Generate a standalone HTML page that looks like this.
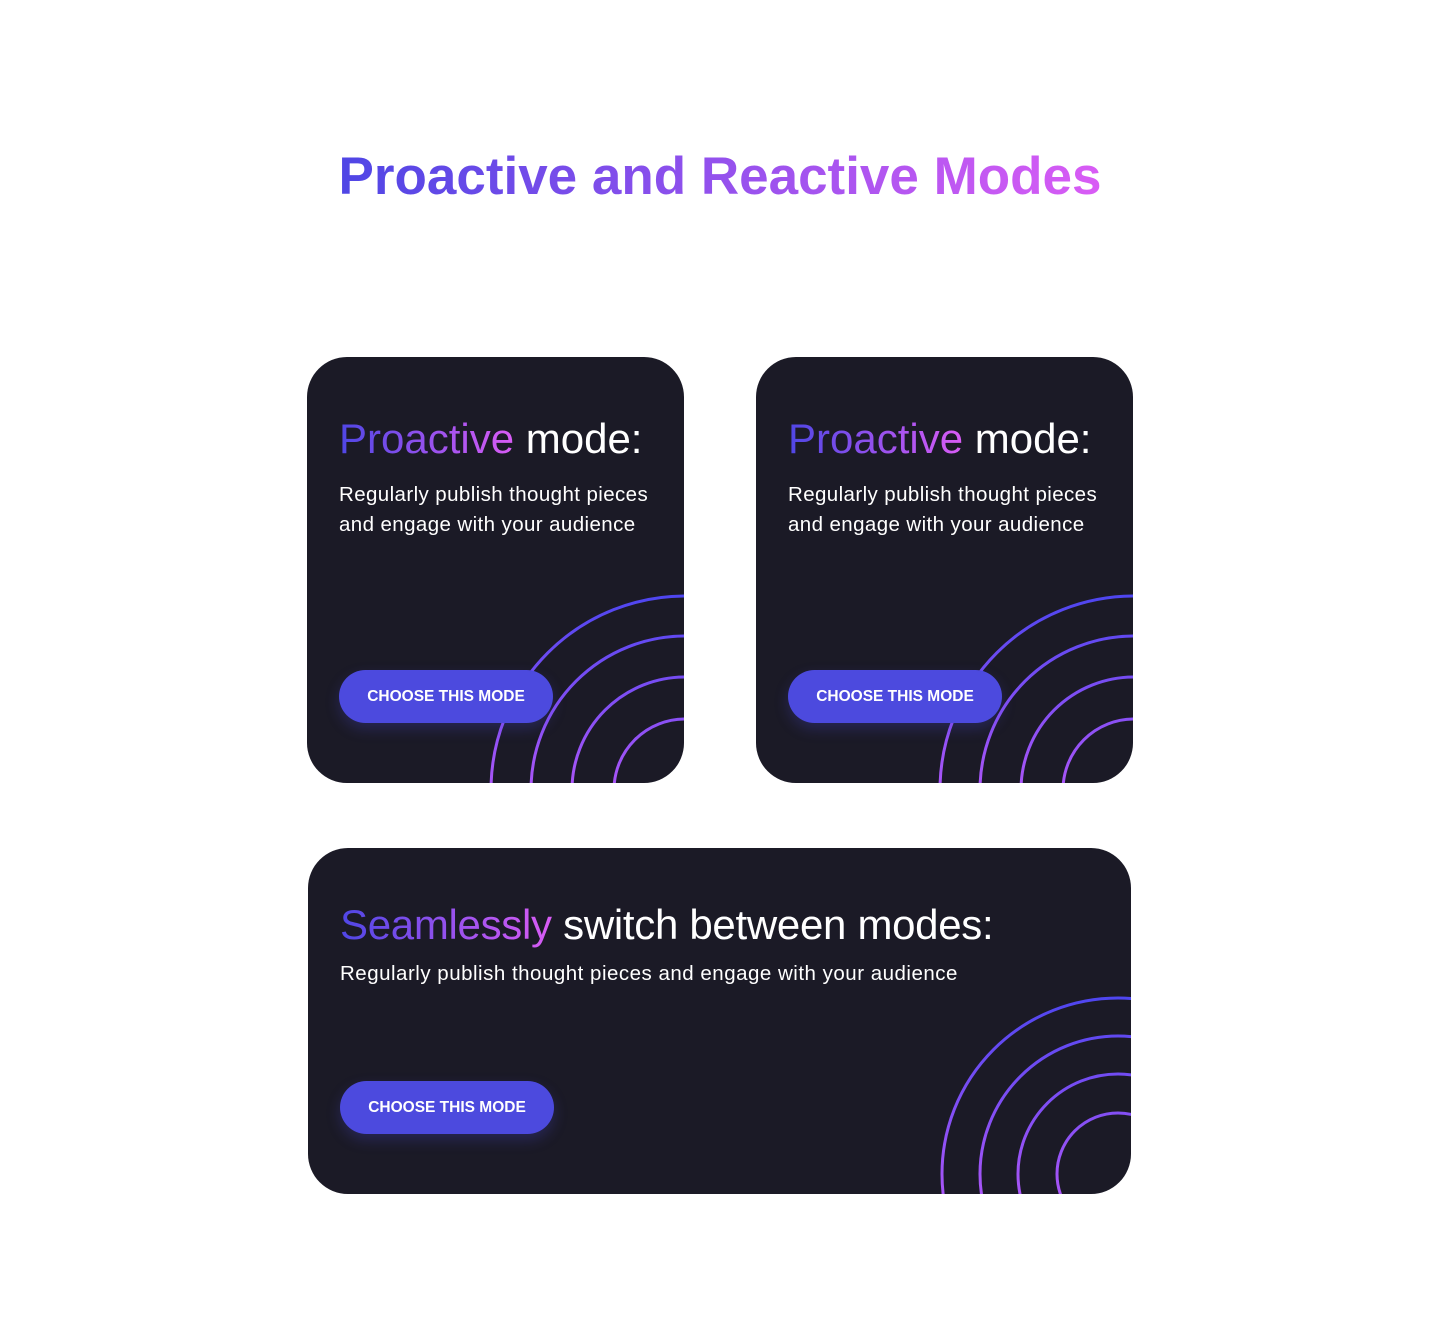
<!DOCTYPE html>
<html><head><style>
body{margin:0;width:1440px;height:1331px;background:#fff;font-family:"Liberation Sans",sans-serif;position:relative;overflow:hidden}
.g{background:linear-gradient(90deg,#4f46e5,#d95cf5);-webkit-background-clip:text;background-clip:text;color:transparent}
h1{position:absolute;top:146px;left:0;width:1440px;text-align:center;margin:0;font-size:53px;font-weight:bold;letter-spacing:0px}
h1 span{display:inline-block}
.card{position:absolute;background:#1b1a26;border-radius:40px;overflow:hidden}
.card h2{position:absolute;margin:0;font-size:42px;font-weight:normal;color:#fff;letter-spacing:0px;white-space:nowrap}
.card p{position:absolute;margin:0;color:#fff;font-size:20.5px;line-height:30px;font-weight:300;letter-spacing:0.4px;white-space:nowrap}
.btn{position:absolute;width:214px;height:53px;border-radius:27px;background:#4c4ade;color:#fff;font-size:15.5px;font-weight:bold;text-align:center;line-height:53px;box-shadow:0 6px 14px rgba(76,74,222,.25);z-index:2}
svg{position:absolute;left:0;top:0}
</style></head><body>
<h1><span class="g">Proactive and Reactive Modes</span></h1>

<div class="card" style="left:307px;top:357px;width:377px;height:426px">
<h2 style="left:32px;top:58px"><span class="g">Proactive</span> mode:</h2>
<p style="left:32px;top:123px">Regularly publish thought pieces<br>and engage with your audience</p>
<div class="btn" style="left:32px;top:313px">CHOOSE THIS MODE</div>
<svg width="377" height="426"><defs><linearGradient id="a" x1="0" y1="240" x2="0" y2="426" gradientUnits="userSpaceOnUse"><stop offset="0" stop-color="#4f46f0"/><stop offset="1" stop-color="#a855f7"/></linearGradient></defs>
<g fill="none" stroke="url(#a)" stroke-width="3"><circle cx="378" cy="433" r="194"/><circle cx="378" cy="433" r="154"/><circle cx="378" cy="433" r="113"/><circle cx="378" cy="433" r="71"/></g></svg>
</div>

<div class="card" style="left:756px;top:357px;width:377px;height:426px">
<h2 style="left:32px;top:58px"><span class="g">Proactive</span> mode:</h2>
<p style="left:32px;top:123px">Regularly publish thought pieces<br>and engage with your audience</p>
<div class="btn" style="left:32px;top:313px">CHOOSE THIS MODE</div>
<svg width="377" height="426"><defs><linearGradient id="b" x1="0" y1="240" x2="0" y2="426" gradientUnits="userSpaceOnUse"><stop offset="0" stop-color="#4f46f0"/><stop offset="1" stop-color="#a855f7"/></linearGradient></defs>
<g fill="none" stroke="url(#b)" stroke-width="3"><circle cx="378" cy="433" r="194"/><circle cx="378" cy="433" r="154"/><circle cx="378" cy="433" r="113"/><circle cx="378" cy="433" r="71"/></g></svg>
</div>

<div class="card" style="left:308px;top:848px;width:823px;height:346px">
<h2 style="left:32px;top:53px;font-size:42px;letter-spacing:-0.3px"><span class="g">Seamlessly</span> switch between modes:</h2>
<p style="left:32px;top:111px;letter-spacing:0.5px">Regularly publish thought pieces and engage with your audience</p>
<div class="btn" style="left:32px;top:233px">CHOOSE THIS MODE</div>
<svg width="823" height="346"><defs><linearGradient id="c" x1="0" y1="150" x2="0" y2="346" gradientUnits="userSpaceOnUse"><stop offset="0" stop-color="#4f46f0"/><stop offset="1" stop-color="#a855f7"/></linearGradient></defs>
<g fill="none" stroke="url(#c)" stroke-width="3"><circle cx="810" cy="326" r="176"/><circle cx="810" cy="326" r="138"/><circle cx="810" cy="326" r="100"/><circle cx="810" cy="326" r="61"/></g></svg>
</div>
</body></html>
